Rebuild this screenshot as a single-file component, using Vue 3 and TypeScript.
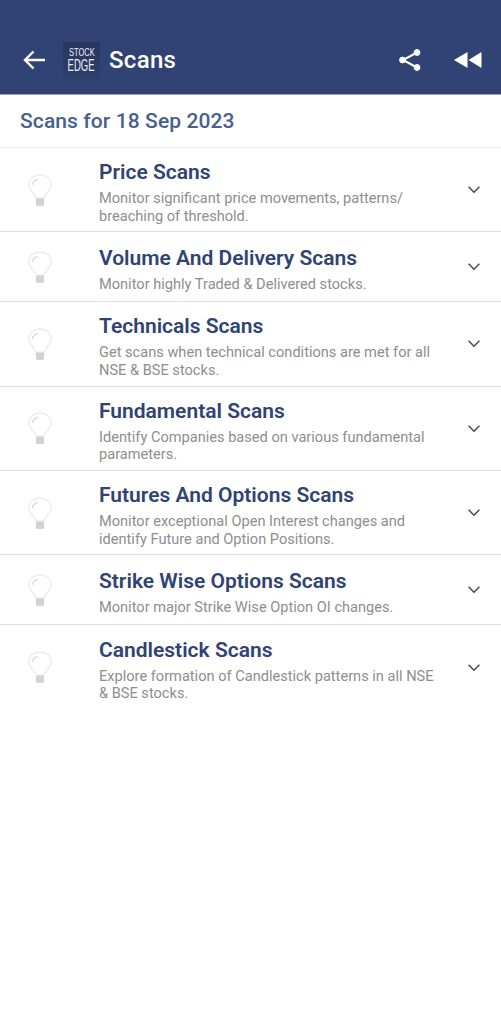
<script setup lang="ts">
interface Scan { title: string; lines: string[] }
const scans: Scan[] = [
  { title: 'Price Scans', lines: ['Monitor significant price movements, patterns/', 'breaching of threshold.'] },
  { title: 'Volume And Delivery Scans', lines: ['Monitor highly Traded & Delivered stocks.'] },
  { title: 'Technicals Scans', lines: ['Get scans when technical conditions are met for all', 'NSE & BSE stocks.'] },
  { title: 'Fundamental Scans', lines: ['Identify Companies based on various fundamental', 'parameters.'] },
  { title: 'Futures And Options Scans', lines: ['Monitor exceptional Open Interest changes and', 'identify Future and Option Positions.'] },
  { title: 'Strike Wise Options Scans', lines: ['Monitor major Strike Wise Option OI changes.'] },
  { title: 'Candlestick Scans', lines: ['Explore formation of Candlestick patterns in all NSE', '& BSE stocks.'] },
]
</script>

<template>
  <div class="page">
    <header class="bar">
      <svg class="back" width="24" height="24" viewBox="0 0 24 24" fill="none" stroke="#fff" stroke-width="2.4">
        <path d="M23 12H3M11.500 3.500 3 12l8.500 8.500" />
      </svg>
      <div class="logo"><span class="stock">STOCK</span><span class="edge">EDGE</span></div>
      <h1>Scans</h1>
      <svg class="share" width="24" height="24" viewBox="0 0 24 24" fill="#fff" stroke="#fff">
        <path d="M19 4.500 5 12l14 7.500" fill="none" stroke-width="2" />
        <circle cx="19" cy="4.500" r="2.900" />
        <circle cx="4.500" cy="12" r="2.900" />
        <circle cx="19" cy="19.500" r="2.900" />
      </svg>
      <svg class="rewind" width="28" height="16" viewBox="0 0 28 16" fill="#fff">
        <path d="M0 8 13.500 0v16zM14.500 8 27.500 0v16z" />
      </svg>
    </header>
    <h2 class="date">Scans for 18 Sep 2023</h2>
    <ul class="list">
      <li v-for="s in scans" :key="s.title" class="row" :class="{ two: s.lines.length > 1 }">
        <svg class="bulb" width="24" height="32" viewBox="0 0 24 32" fill="none">
          <path d="M8 24C7.500 20 .8 16.500.8 11 .8 5 6 .8 12 .8S23.200 5 23.200 11c0 5.500-6.700 9-7.200 13z" stroke="#e8e8e8" stroke-width="1.200" />
          <path d="M4.500 11c.2-2.500 2.300-4.800 5.500-5.300" stroke="#d6d6d6" stroke-width="1.200" />
          <path d="M8 24.500h8V30.500L15 32H9L8 30.500z" fill="#d2d2d2" />
        </svg>
        <div class="text">
          <h3>{{ s.title }}</h3>
          <p v-for="l in s.lines" :key="l">{{ l }}</p>
        </div>
        <svg class="chev" width="12" height="7" viewBox="0 0 12 7" fill="none" stroke="#505050" stroke-width="1.600">
          <path d="M.6.8 6 6.200 11.400.8" />
        </svg>
      </li>
    </ul>
  </div>
</template>

<style>
html, body { margin: 0; background: #fff; }
</style>

<style scoped>
.page { width: 501px; height: 1024px; background: #fff; font-family: Roboto, sans-serif; overflow: hidden; }
.bar { height: 95px; box-sizing: border-box; background: #304374; display: flex; align-items: center; padding: 26px 19px 0 22px; border-bottom: 1px solid #9aa5c0; }
.back { flex: none; }
.logo { flex: none; width: 37px; height: 37px; margin-left: 17px; background: linear-gradient(#26365f, #2d3f6e); color: #eef0f5; display: flex; flex-direction: column; align-items: center; justify-content: center; font-family: "Liberation Sans", sans-serif; white-space: nowrap; }
.stock { font-size: 11px; line-height: 12px; transform: scaleX(.68); }
.edge { font-size: 17px; line-height: 16px; transform: scaleX(.56); }
h1 { margin: 0 0 0 9px; flex: 1; color: #fff; font-size: 24px; font-weight: 500; letter-spacing: .3px; }
.share { margin-right: 32px; }
.date { margin: 0; height: 53px; line-height: 53px; padding-left: 20px; font-size: 21px; font-weight: 500; color: #47608f; border-bottom: 1px solid #e8e8e8; box-sizing: border-box; letter-spacing: .1px; }
.list { list-style: none; margin: 0; padding: 0; }
.row { height: 70px; box-sizing: border-box; display: flex; align-items: center; border-bottom: 1px solid #dedede; padding: 0 21px 0 28px; }
.row.two { height: 84.300px; }
.row:last-child { border-bottom: none; }
.bulb { flex: none; }
.text { flex: 1; margin-left: 47px; padding-top: 5px; }
h3 { margin: 0 0 5px; font-size: 21px; line-height: 26px; font-weight: 600; color: #304374; }
p { margin: 0; font-size: 14.600px; line-height: 17.500px; color: #8e8e8e; white-space: nowrap; }
.chev { flex: none; }
</style>
